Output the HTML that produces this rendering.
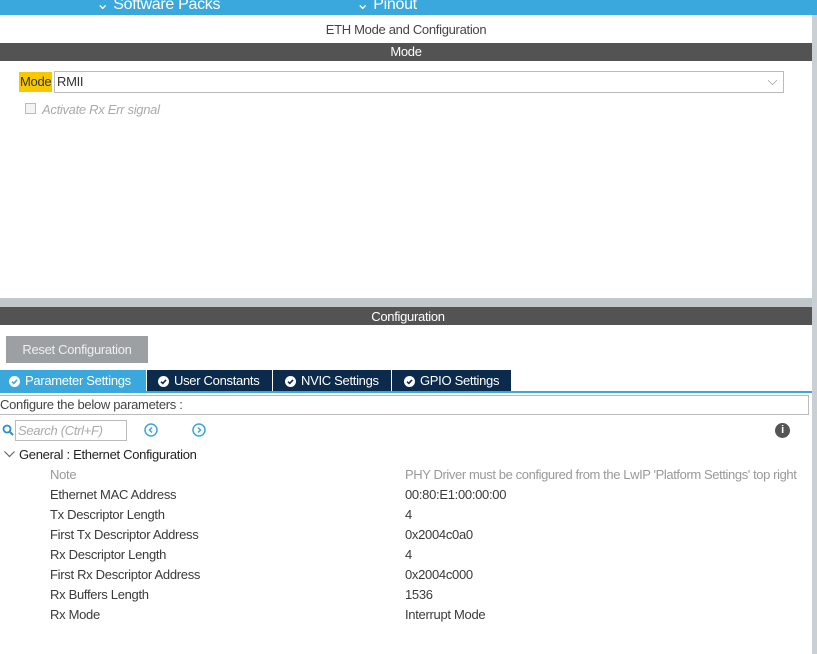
<!DOCTYPE html>
<html><head><style>
*{margin:0;padding:0;box-sizing:border-box}
body{width:817px;height:654px;overflow:hidden;background:#fff;font-family:"Liberation Sans",sans-serif;font-size:13px;color:#333;position:relative;letter-spacing:-0.3px}
.a{position:absolute;white-space:nowrap}
.row{position:absolute;font-size:13px;color:#3a3a3a;white-space:nowrap}
.tab{position:absolute;top:370px;height:22px;color:#fff;line-height:22px;white-space:nowrap}
.tab svg{vertical-align:-2px;margin-right:5px}
</style></head><body>
<div class="a" style="left:0;top:0;width:817px;height:15px;background:#3aa8dc;overflow:hidden">
 <div class="a" style="left:96px;top:-6px;color:#fff;font-size:16px">⌄ Software Packs</div>
 <div class="a" style="left:356px;top:-6px;color:#fff;font-size:16px">⌄ Pinout</div>
</div>
<div class="a" style="left:812px;top:15px;width:5px;height:639px;background:#c9cfd2"></div>
<div class="a" style="left:0;top:22px;width:812px;text-align:center;font-size:13px;color:#444">ETH Mode and Configuration</div>
<div class="a" style="left:0;top:43px;width:812px;height:18px;background:#525352;color:#fff;text-align:center;font-size:13px;line-height:18px">Mode</div>
<div class="a" style="left:19px;top:72px;height:20px;background:#f5c800;font-size:13px;line-height:20px;padding:0 1px">Mode</div>
<div class="a" style="left:54px;top:71px;width:730px;height:22px;border:1px solid #bbb;font-size:13px;line-height:20px;padding-left:2px;color:#333">RMII<span class="a" style="right:6px;top:-1px;color:#888">⌵</span></div>
<div class="a" style="left:25px;top:103px;width:11px;height:11px;border:1px solid #bbb;background:#f4f4f4"></div>
<div class="a" style="left:42px;top:102px;font-style:italic;color:#aaa;font-size:13px">Activate Rx Err signal</div>
<div class="a" style="left:0;top:298px;width:812px;height:9px;background:#bfc7cb"></div>
<div class="a" style="left:0;top:307px;width:812px;height:18px;background:#525352;color:#fff;text-align:center;font-size:13px;line-height:20px;padding-left:4px">Configuration</div>
<div class="a" style="left:6px;top:336px;width:142px;height:27px;background:#9da0a3;color:#eee;font-size:13px;line-height:27px;text-align:center">Reset Configuration</div>
<div class="tab" style="left:0;width:146px;background:#3aa8dc;padding-left:9px"><svg width="11" height="11" viewBox="0 0 11 11"><circle cx="5.5" cy="5.5" r="5.5" fill="#fff"/><path d="M3 5.7L4.8 7.4 8 3.9" stroke="#3aa8dc" stroke-width="1.6" fill="none"/></svg>Parameter Settings</div>
<div class="tab" style="left:147px;width:125px;background:#0c2a4c;padding-left:11px"><svg width="11" height="11" viewBox="0 0 11 11"><circle cx="5.5" cy="5.5" r="5.5" fill="#fff"/><path d="M3 5.7L4.8 7.4 8 3.9" stroke="#0c2a4c" stroke-width="1.6" fill="none"/></svg>User Constants</div>
<div class="tab" style="left:273px;width:118px;background:#0c2a4c;padding-left:12px"><svg width="11" height="11" viewBox="0 0 11 11"><circle cx="5.5" cy="5.5" r="5.5" fill="#fff"/><path d="M3 5.7L4.8 7.4 8 3.9" stroke="#0c2a4c" stroke-width="1.6" fill="none"/></svg>NVIC Settings</div>
<div class="tab" style="left:392px;width:119px;background:#0c2a4c;padding-left:12px"><svg width="11" height="11" viewBox="0 0 11 11"><circle cx="5.5" cy="5.5" r="5.5" fill="#fff"/><path d="M3 5.7L4.8 7.4 8 3.9" stroke="#0c2a4c" stroke-width="1.6" fill="none"/></svg>GPIO Settings</div>
<div class="a" style="left:0;top:391px;width:812px;height:2px;background:#3aa8dc"></div>
<div class="a" style="left:-1px;top:395px;width:810px;height:20px;border:1px solid #bbb;line-height:18px;color:#444">Configure the below parameters :</div>
<svg class="a" style="left:2px;top:424px" width="12" height="12" viewBox="0 0 12 12"><circle cx="5" cy="5" r="3.5" stroke="#2a8fd0" stroke-width="1.8" fill="none"/><path d="M7.5 7.5L11 11" stroke="#2a8fd0" stroke-width="2"/></svg>
<div class="a" style="left:15px;top:420px;width:112px;height:21px;border:1px solid #bbb;font-style:italic;color:#aaa;line-height:19px;padding-left:2px">Search (Ctrl+F)</div>
<svg class="a" style="left:144px;top:423px" width="14" height="14" viewBox="0 0 14 14"><circle cx="7" cy="7" r="6" stroke="#3aa8dc" stroke-width="1.5" fill="none"/><path d="M8 4.5L5.5 7 8 9.5" stroke="#3aa8dc" stroke-width="1.5" fill="none"/></svg>
<svg class="a" style="left:192px;top:423px" width="14" height="14" viewBox="0 0 14 14"><circle cx="7" cy="7" r="6" stroke="#3aa8dc" stroke-width="1.5" fill="none"/><path d="M6 4.5L8.5 7 6 9.5" stroke="#3aa8dc" stroke-width="1.5" fill="none"/></svg>
<div class="a" style="left:775px;top:423px;width:15px;height:15px;border-radius:50%;background:#555;color:#fff;font-size:11px;font-weight:bold;line-height:15px;text-align:center">i</div>
<svg class="a" style="left:4px;top:451px" width="11" height="7" viewBox="0 0 11 7"><path d="M0.5 0.5L5.5 5.5 10.5 0.5" stroke="#666" stroke-width="1.2" fill="none"/></svg>
<div class="a" style="left:19px;top:447px;color:#222">General : Ethernet Configuration</div>
<div class="row" style="left:50px;top:467px;color:#999">Note</div><div class="row" style="left:405px;top:467px;color:#999;letter-spacing:-0.4px">PHY Driver must be configured from the LwIP 'Platform Settings' top right</div>
<div class="row" style="left:50px;top:487px">Ethernet MAC Address</div><div class="row" style="left:405px;top:487px">00:80:E1:00:00:00</div>
<div class="row" style="left:50px;top:507px">Tx Descriptor Length</div><div class="row" style="left:405px;top:507px">4</div>
<div class="row" style="left:50px;top:527px">First Tx Descriptor Address</div><div class="row" style="left:405px;top:527px">0x2004c0a0</div>
<div class="row" style="left:50px;top:547px">Rx Descriptor Length</div><div class="row" style="left:405px;top:547px">4</div>
<div class="row" style="left:50px;top:567px">First Rx Descriptor Address</div><div class="row" style="left:405px;top:567px">0x2004c000</div>
<div class="row" style="left:50px;top:587px">Rx Buffers Length</div><div class="row" style="left:405px;top:587px">1536</div>
<div class="row" style="left:50px;top:607px">Rx Mode</div><div class="row" style="left:405px;top:607px">Interrupt Mode</div>
</body></html>
